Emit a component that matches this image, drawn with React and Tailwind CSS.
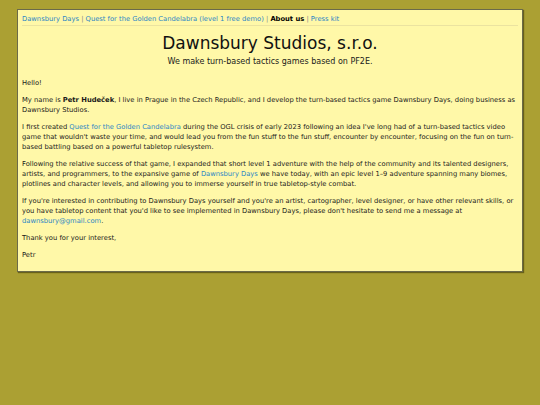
const A = ({ children }) => (
  <a href="#" className="text-[#2b86c5] no-underline">
    {children}
  </a>
)

const Sep = () => <span className="text-[#888]"> | </span>

const App = () => {
  return (
    <div
      className="min-h-[405px] bg-[#aba033] pt-[9px] pb-[20px]"
      style={{ fontFamily: '"DejaVu Sans", Verdana, sans-serif' }}
    >
      <div className="mx-[17px] bg-[#fff8a8] border border-[#6b6a4a] shadow-[1px_1px_1px_rgba(60,55,10,0.6)] px-[4px] pt-[4px] pb-[11px] text-[6.75px] leading-[10px] text-[#1a1a1a]">
        <nav className="border-b border-[#ebe3a0] pb-[1px]">
          <A>Dawnsbury Days</A>
          <Sep />
          <A>Quest for the Golden Candelabra (level 1 free demo)</A>
          <Sep />
          <b className="text-black">About us</b>
          <Sep />
          <A>Press kit</A>
        </nav>

        <h1 className="text-center text-[17px] leading-[20px] mt-[7px] text-[#111]">Dawnsbury Studios, s.r.o.</h1>
        <p className="text-center text-[8px] leading-[10px] mt-[4px]">We make turn-based tactics games based on PF2E.</p>

        <div className="mt-[11px] flex flex-col gap-[7px]">
          <p>Hello!</p>
          <p>
            My name is <b>Petr Hudeček</b>, I live in Prague in the Czech Republic, and I develop the turn-based tactics game Dawnsbury Days, doing business as Dawnsbury Studios.
          </p>
          <p>
            I first created <A>Quest for the Golden Candelabra</A> during the OGL crisis of early 2023 following an idea I've long had of a turn-based tactics video game that wouldn't waste your time, and would lead you from the fun stuff to the fun stuff, encounter by encounter, focusing on the fun on turn-based battling based on a powerful tabletop rulesystem.
          </p>
          <p>
            Following the relative success of that game, I expanded that short level 1 adventure with the help of the community and its talented designers, artists, and programmers, to the expansive game of <A>Dawnsbury Days</A> we have today, with an epic level 1–9 adventure spanning many biomes, plotlines and character levels, and allowing you to immerse yourself in true tabletop-style combat.
          </p>
          <p>
            If you're interested in contributing to Dawnsbury Days yourself and you're an artist, cartographer, level designer, or have other relevant skills, or you have tabletop content that you'd like to see implemented in Dawnsbury Days, please don't hesitate to send me a message at <A>dawnsbury@gmail.com</A>.
          </p>
          <p>Thank you for your interest,</p>
          <p>Petr</p>
        </div>
      </div>
    </div>
  )
}

export default App
